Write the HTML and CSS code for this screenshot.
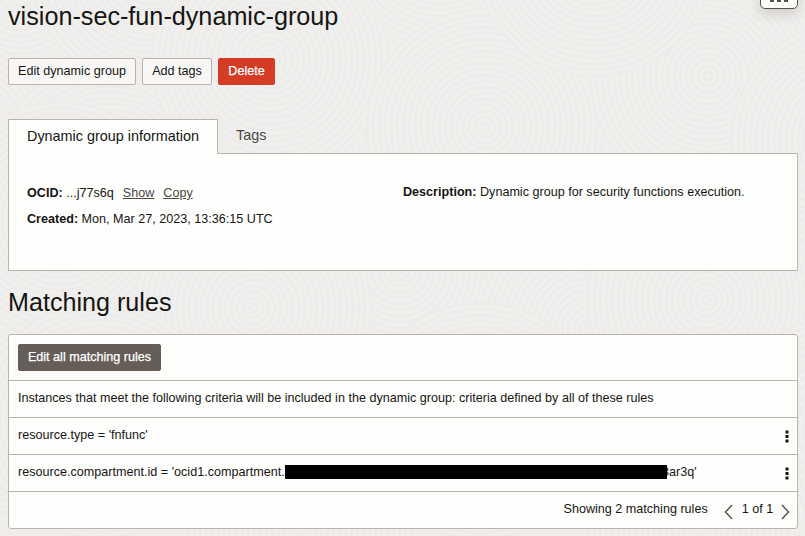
FILE: index.html
```html
<!DOCTYPE html>
<html lang="en">
<head>
<meta charset="utf-8">
<title>vision-sec-fun-dynamic-group</title>
<link rel="stylesheet" href="styles.css">
</head>
<body>
<svg class="texture" width="805" height="536" viewBox="0 0 805 536" aria-hidden="true">
  <defs>
    <g id="swirl">
      <circle class="disc" r="119"/>
      <g class="rings">
        <circle r="4"/><circle r="10"/><circle r="16"/><circle r="22"/><circle r="28"/><circle r="34"/><circle r="40"/><circle r="46"/><circle r="52"/><circle r="58"/><circle r="64"/><circle r="70"/><circle r="76"/><circle r="82"/><circle r="88"/><circle r="94"/><circle r="100"/><circle r="106"/><circle r="112"/><circle r="118"/>
      </g>
    </g>
  </defs>
  <use href="#swirl" x="20" y="-10"/>
  <use href="#swirl" x="780" y="-60"/>
  <use href="#swirl" x="150" y="-30"/>
  <use href="#swirl" x="-60" y="150"/>
  <use href="#swirl" x="110" y="180"/>
  <use href="#swirl" x="380" y="140"/>
  <use href="#swirl" x="440" y="-60"/>
  <use href="#swirl" x="270" y="60"/>
  <use href="#swirl" x="485" y="127"/>
  <use href="#swirl" x="708" y="76"/>
  <use href="#swirl" x="594" y="-42"/>
  <use href="#swirl" x="850" y="140"/>
  <use href="#swirl" x="-30" y="400"/>
  <use href="#swirl" x="60" y="220"/>
  <use href="#swirl" x="400" y="270"/>
  <use href="#swirl" x="590" y="330"/>
  <use href="#swirl" x="706" y="300"/>
  <use href="#swirl" x="253" y="308"/>
  <use href="#swirl" x="480" y="421"/>
  <use href="#swirl" x="850" y="430"/>
  <use href="#swirl" x="100" y="420"/>
  <use href="#swirl" x="700" y="530"/>
  <use href="#swirl" x="300" y="530"/>
</svg>
<main class="page">
  <div class="more-float"><i></i><i></i><i></i></div>
  <h1>vision-sec-fun-dynamic-group</h1>
  <div class="actions">
    <button class="btn btn-edit">Edit dynamic group</button>
    <button class="btn btn-tags">Add tags</button>
    <button class="btn btn-delete">Delete</button>
  </div>
  <div class="tabs">
    <div class="tab active">Dynamic group information</div>
    <div class="tab">Tags</div>
  </div>
  <section class="info">
    <div class="col-left">
      <p><b>OCID:</b> <span>...j77s6q</span><a>Show</a><a>Copy</a></p>
      <p><b>Created:</b> <span>Mon, Mar 27, 2023, 13:36:15 UTC</span></p>
    </div>
    <div class="col-right">
      <p><b>Description:</b> <span>Dynamic group for security functions execution.</span></p>
    </div>
  </section>
  <h2>Matching rules</h2>
  <section class="rules">
    <div class="toolbar"><button class="btn btn-rules">Edit all matching rules</button></div>
    <div class="row"><span>Instances that meet the following criteria will be included in the dynamic group: criteria defined by all of these rules</span></div>
    <div class="row"><span>resource.type = 'fnfunc'</span><svg class="kebab" width="4" height="13" viewBox="0 0 4 13"><path d="M.5.500h3v3h-3zM.5 5h3v3h-3zM.5 9.500h3v3h-3z"/></svg></div>
    <div class="row"><div class="rule"><span class="rule-start">resource.compartment.id = 'ocid1.compartment.</span><span class="redacted"></span><span class="rule-end">3ar3q'</span></div><svg class="kebab" width="4" height="13" viewBox="0 0 4 13"><path d="M.5.500h3v3h-3zM.5 5h3v3h-3zM.5 9.500h3v3h-3z"/></svg></div>
    <div class="row footer">
      <span>Showing 2 matching rules</span>
      <svg class="prev" width="9" height="16" viewBox="0 0 9 16"><path d="M8 1 1.500 8 8 15"/></svg>
      <span>1 of 1</span>
      <svg class="next" width="9" height="16" viewBox="0 0 9 16"><path d="M1 1 7.500 8 1 15"/></svg>
    </div>
  </section>
</main>
</body>
</html>
```
FILE: styles.css
```css
* { box-sizing: border-box; }
body {
  margin: 0;
  height: 536px;
  overflow: hidden;
  background: #efeeec;
  color: #161513;
  font: 12.6px/16px "Liberation Sans", Arial, sans-serif;
}
.texture { position: absolute; left: 0; top: 0; z-index: -1; }
.disc { fill: #f0efed; }
.rings { fill: none; stroke: #ecebe9; stroke-width: 2; }
.page { position: relative; width: 805px; padding: 0 7px 0 8px; }
h1, h2, p { margin: 0; font-weight: 400; }
h1 { height: 58px; padding-top: 1px; font-size: 25.2px; line-height: 30px; }
.more-float {
  position: absolute;
  left: 760px;
  top: -15px;
  width: 38px;
  height: 24px;
  display: flex;
  justify-content: center;
  align-items: flex-end;
  gap: 3px;
  padding-bottom: 6px;
  border: 1px solid #55504d;
  border-radius: 5px;
  background: #fefefd;
  box-shadow: 0 6px 12px rgba(0, 0, 0, .12);
}
.more-float i { width: 4px; height: 4px; background: #55504d; }
.actions { display: flex; gap: 6px; height: 61px; }
.btn {
  height: 27px;
  padding: 0 0 2px;
  border: 1px solid #b9b4af;
  border-radius: 2px;
  background: #f8f7f6;
  color: #161513;
  font: inherit;
  white-space: nowrap;
}
.btn-edit { width: 128px; }
.btn-tags { width: 70px; }
.btn-delete { width: 57px; border-color: #d63b25; background: #d63b25; color: #fff; -webkit-text-stroke: .25px #fff; }
.tabs { display: flex; height: 35px; margin-bottom: -1px; font-size: 14.4px; position: relative; }
.tab { height: 34px; padding: 8px 18px 0; color: #4b4744; }
.tab.active {
  width: 210px;
  height: 35px;
  border: 1px solid #b9b4af;
  border-bottom: 0;
  background: #fefefd;
  color: #161513;
  white-space: nowrap;
}
.info {
  display: flex;
  height: 118px;
  padding: 30px 18px 0;
  border: 1px solid #b9b4af;
  background: #fefefd;
}
.col-left { width: 376px; }
.col-left p { height: 26px; }
.col-left p:first-child { height: 27px; padding-top: 1px; }
.info b { font-weight: 700; }
a { color: #4b4744; text-decoration: underline; margin-left: 9px; }
h2 { height: 63px; padding-top: 16px; font-size: 25.15px; line-height: 30px; }
.rules {
  border: 1px solid #b9b4af;
  border-radius: 3px;
  background: #fefefd;
}
.toolbar { height: 45px; padding: 9px; }
.btn-rules { display: block; width: 143px; border-color: #665c58; background: #665c58; color: #fff; -webkit-text-stroke: .25px #fff; }
.row {
  display: flex;
  justify-content: space-between;
  height: 37px;
  padding: 9px 8px 0 9px;
  border-top: 1px solid #b9b4af;
  white-space: nowrap;
}
.rule { display: flex; }
.rule-start { width: 267px; }
.redacted { position: relative; z-index: 1; width: 382px; height: 14px; margin-top: 1px; background: #000; }
.rule-end { margin-left: -5px; }
.kebab { flex: none; margin-top: 3px; fill: #161513; }
.footer { justify-content: flex-start; padding-left: 554.5px; }
.footer svg { margin-top: 3px; fill: none; stroke: #55504d; stroke-width: 1.4; flex: none; }
.footer .prev { margin-left: 16.5px; margin-right: 8.5px; }
.footer .next { margin-left: 8px; }
```
